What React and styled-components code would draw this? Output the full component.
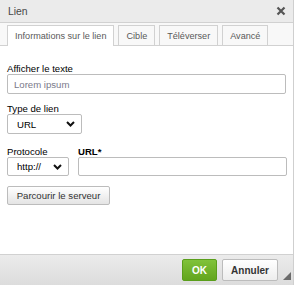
import React from "react";
import styled, { createGlobalStyle } from "styled-components";

const Global = createGlobalStyle`
  html, body { margin: 0; padding: 0; background: #fff; }
  body { font-family: "Liberation Sans", Arial, sans-serif; }
  * { box-sizing: border-box; }
`;

const Dialog = styled.div`
  width: 294px;
  height: 285px;
  display: flex;
  flex-direction: column;
  border-right: 1px solid #cfcfcf;
  background: #fff;
  color: #333;
`;

const TitleBar = styled.div`
  height: 23px;
  flex: none;
  display: flex;
  align-items: center;
  justify-content: space-between;
  padding: 0 6px 0 8px;
  background: #ebebeb;
  border-bottom: 1px solid #d1d1d1;
  font-size: 10.4px;
  color: #484848;
`;

const Close = styled.span`
  display: flex;
  width: 12px;
  height: 12px;
  align-items: center;
  justify-content: center;
`;

const TabStrip = styled.div`
  height: 23px;
  flex: none;
  display: flex;
  align-items: flex-end;
  gap: 4px;
  padding-left: 7px;
  background: #f8f8f8;
  border-bottom: 1px solid #d1d1d1;
`;

const Tab = styled.div`
  padding: 0 7px;
  display: flex;
  align-items: center;
  font-size: 9.1px;
  color: #595959;
  background: ${(p) => (p.$active ? "#fff" : "#f8f8f8")};
  border: 1px solid #d1d1d1;
  border-bottom: none;
  margin-bottom: ${(p) => (p.$active ? "-1px" : "0")};
  height: ${(p) => (p.$active ? "21px" : "20px")};
`;

const Body = styled.div`
  flex: 1;
  padding: 17px 7px 0 7px;
  display: flex;
  flex-direction: column;
`;

const Field = styled.div`
  display: flex;
  flex-direction: column;
  margin-bottom: ${(p) => p.$mb || 0}px;
`;

const Label = styled.label`
  display: block;
  font-size: 9.6px;
  line-height: 11px;
  color: #000;
  font-weight: ${(p) => (p.$bold ? "bold" : "normal")};
`;

const TextInput = styled.div`
  height: ${(p) => p.$h || 20}px;
  border: 1px solid #bcbcbc;
  border-radius: 2px;
  background: #fff;
  display: flex;
  align-items: center;
  padding-left: 6px;
  font-size: 9.6px;
  color: #7a7a8a;
`;

const Select = styled.div`
  width: ${(p) => p.$w}px;
  height: ${(p) => p.$h || 20}px;
  border: 1px solid #bcbcbc;
  border-radius: 2px;
  background: #fff;
  display: flex;
  align-items: center;
  justify-content: space-between;
  padding: 0 6px 0 9px;
  font-size: 9.6px;
  color: #000;
`;

const Row = styled.div`
  display: flex;
  gap: 9px;
  margin-bottom: 10px;
`;

const Grow = styled(Field)`
  flex: 1;
  margin-right: -1px;
`;

const ServerButton = styled.button`
  align-self: flex-start;
  height: 19px;
  width: 103px;
  padding: 0;
  border: 1px solid #bcbcbc;
  border-radius: 2px;
  background: linear-gradient(#ffffff, #e4e4e4);
  font-family: "Liberation Sans", Arial, sans-serif;
  font-size: 9.6px;
  color: #333;
`;

const Footer = styled.div`
  height: 31px;
  flex: none;
  border-top: 1px solid #d1d1d1;
  background: linear-gradient(#ebebeb, #dcdcdc);
  display: flex;
  align-items: flex-start;
  justify-content: flex-end;
  padding: 4px 0 0 0;
  position: relative;
`;

const Buttons = styled.div`
  display: flex;
  gap: 5px;
  margin-right: 15px;
`;

const Btn = styled.button`
  height: 22px;
  width: ${(p) => p.$w}px;
  padding: 0;
  border-radius: 2px;
  font-family: "Liberation Sans", Arial, sans-serif;
  font-size: 10px;
  font-weight: bold;
  border: 1px solid ${(p) => (p.$ok ? "#5a9e1b" : "#bcbcbc")};
  color: ${(p) => (p.$ok ? "#fff" : "#333")};
  background: ${(p) =>
    p.$ok ? "linear-gradient(#80c23a, #62a51d)" : "linear-gradient(#ffffff, #ededed)"};
`;

const Grip = styled.span`
  position: absolute;
  right: 2px;
  bottom: 5px;
  width: 8px;
  height: 8px;
  display: flex;
`;

const Chevron = () => (
  <svg width="9" height="6" viewBox="0 0 9 6">
    <path d="M1 1 L4.5 4.5 L8 1" fill="none" stroke="#111" strokeWidth="2" />
  </svg>
);

export default function App() {
  return (
    <>
      <Global />
      <Dialog>
        <TitleBar>
          <span>Lien</span>
          <Close>
            <svg width="10" height="10" viewBox="0 0 10 10">
              <path d="M1.5 1.5 L8.5 8.5 M8.5 1.5 L1.5 8.5" stroke="#555" strokeWidth="2.2" />
            </svg>
          </Close>
        </TitleBar>
        <TabStrip>
          <Tab $active>Informations sur le lien</Tab>
          <Tab>Cible</Tab>
          <Tab>Téléverser</Tab>
          <Tab>Avancé</Tab>
        </TabStrip>
        <Body>
          <Field $mb={9}>
            <Label>Afficher le texte</Label>
            <TextInput>Lorem ipsum</TextInput>
          </Field>
          <Field $mb={12}>
            <Label>Type de lien</Label>
            <Select $w={75}>
              <span>URL</span>
              <Chevron />
            </Select>
          </Field>
          <Row>
            <Field>
              <Label>Protocole</Label>
              <Select $w={62} $h={19}>
                <span>http://</span>
                <Chevron />
              </Select>
            </Field>
            <Grow>
              <Label $bold>URL*</Label>
              <TextInput $h={19} />
            </Grow>
          </Row>
          <ServerButton>Parcourir le serveur</ServerButton>
        </Body>
        <Footer>
          <Buttons>
            <Btn $ok $w={35}>OK</Btn>
            <Btn $w={56}>Annuler</Btn>
          </Buttons>
          <Grip>
            <svg width="8" height="8" viewBox="0 0 8 8">
              <path d="M8 0 L8 8 L0 8 Z" fill="#6b6b6b" />
            </svg>
          </Grip>
        </Footer>
      </Dialog>
    </>
  );
}
